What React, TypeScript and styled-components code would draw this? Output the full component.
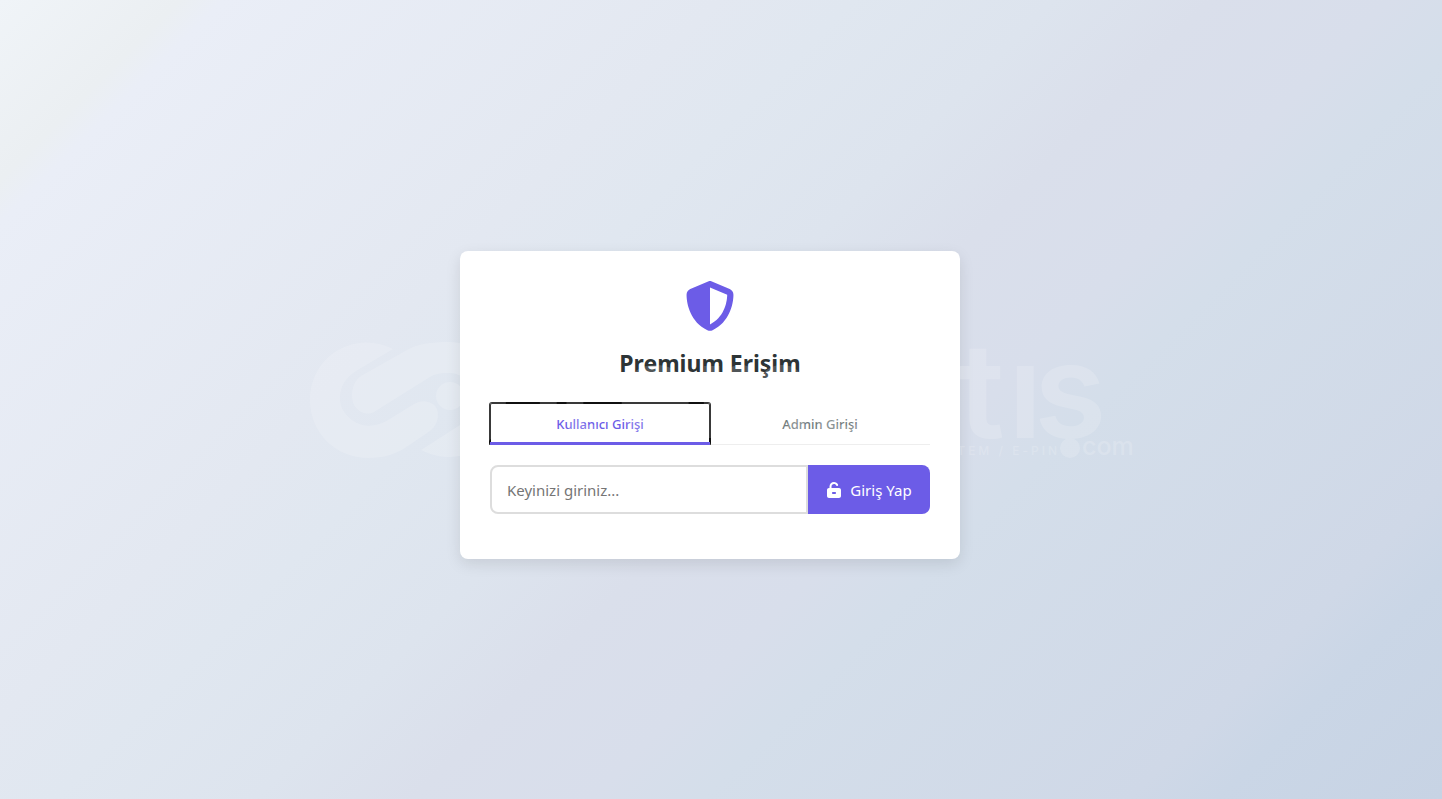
import React, { useState } from "react";
import styled, { createGlobalStyle } from "styled-components";
import { FaShieldHalved, FaUnlockKeyhole } from "react-icons/fa6";

const GlobalStyle = createGlobalStyle`
  * { box-sizing: border-box; }
  body {
    margin: 0;
    font-family: "Noto Sans", "Open Sans", sans-serif;
    color: #2d3436;
  }
`;

const Page = styled.main`
  position: relative;
  min-height: 100vh;
  display: flex;
  align-items: center;
  justify-content: center;
  padding: 11px 22px 0 0;
  background: linear-gradient(
    135deg,
    #f0f4f8 0%, #ebeff2 8%, #eaeef7 10%, #e3e8f1 32%, #e0e7f0 38%,
    #dde4ee 47%, #dadfeb 54%, #d8deeb 62%, #d4deea 67%, #cfd8e7 86%,
    #cad6e6 90%, #c7d3e4 100%
  );
`;

const Card = styled.section`
  width: 100%;
  max-width: 500px;
  padding: 30px 30px 45px;
  background: #fff;
  border-radius: 8px;
  box-shadow: 0 5px 15px rgba(0, 0, 0, 0.1);
`;

const Header = styled.header`
  display: flex;
  flex-direction: column;
  align-items: center;
  gap: 16px;
  color: #6c5ce7;
`;

const Title = styled.h1`
  margin: 0;
  font-size: 23px;
  line-height: 32px;
  font-weight: 700;
  color: #2d3436;
`;

const Tabs = styled.div`
  display: flex;
  margin: 24px 0 20px;
  border-bottom: 1px solid #eee;
`;

const Tab = styled.button<{ $active: boolean }>`
  position: relative;
  flex: 1;
  height: 42px;
  margin-bottom: -1px;
  padding: 0;
  border: 0;
  border-radius: 2px;
  background: none;
  box-shadow: ${(p) => (p.$active ? "0 0 0 1px #101010, inset 0 0 0 1px #101010" : "none")};
  clip-path: inset(-2px -2px 0 -2px);
  font: 500 13px/18px "Noto Sans", sans-serif;
  color: ${(p) => (p.$active ? "#6c5ce7" : "#747d80")};
  outline: none;

  &::after {
    content: "";
    position: absolute;
    inset: auto 0 0;
    height: 3px;
    background: ${(p) => (p.$active ? "#6c5ce7" : "transparent")};
  }
`;

const KeyForm = styled.form`
  display: flex;
  height: 49px;
`;

const KeyInput = styled.input`
  flex: 1;
  min-width: 0;
  padding: 0 15px;
  border: 2px solid #ddd;
  border-radius: 8px 0 0 8px;
  background: #fff;
  font: 400 15px/24px "Noto Sans", sans-serif;
  color: #2d3436;
  outline: none;
  &::placeholder { color: #757575; opacity: 1; }
`;

const Submit = styled.button`
  display: flex;
  align-items: center;
  justify-content: center;
  gap: 8px;
  width: 122px;
  padding: 0;
  border: 0;
  border-radius: 0 8px 8px 0;
  background: #6c5ce7;
  color: #fff;
  font: 400 15px/24px "Noto Sans", sans-serif;
`;

const Watermark = styled.svg`
  position: absolute;
  left: 50%;
  top: 50%;
  width: 824px;
  height: 120px;
  margin: -60px 0 0 -412px;
  overflow: visible;
  pointer-events: none;
  opacity: 0.17;
  fill: #fff;
  font-family: Inter, sans-serif;
`;

function Brand() {
  return (
    <Watermark viewBox="309 340 824 120" aria-hidden="true">
      <path d="M393 349 C376 341 361 341 347 346 C324 354 310 376 310 400 C310 433 336 458 368 458 C385 458 395 454 405 448 L430 431 C440 424 441 407 431 403 C425 400 419 401 414 404 L388 420 C376 427 362 428 352 420 C343 413 340 406 340 398 C340 387 345 378 356 371 Z" />
      <path d="M361 376 L407 350 C417 344 432 342 448 342 C482 342 506 368 506 400 C506 433 480 457 448 457 C438 457 429 454 421 450 L460 425 C472 417 476 409 476 399 C476 383 461 372 447 373 C440 373 435 374 430 377 L374 412 C367 416 358 412 354 405 C350 396 352 382 361 376 Z" />
      <circle cx="450" cy="396" r="14" />
      <g fontSize="132" fontWeight="600">
        <text x="531" y="438">i</text>
        <text x="555" y="438">t</text>
        <text x="616" y="438">e</text>
        <text x="695" y="438">m</text>
        <text x="811" y="438">s</text>
        <text x="880" y="438">a</text>
        <text x="958" y="438">t</text>
        <text x="1008" y="438">ı</text>
        <text x="1034" y="438">s</text>
      </g>
      <circle cx="1070" cy="448" r="10" />
      <text x="1082" y="455" fontSize="25" fontWeight="500">com</text>
      <text x="1060" y="455" fontSize="12" fontWeight="500" letterSpacing="3" textAnchor="end">
        ITEM / E-PIN
      </text>
    </Watermark>
  );
}

export default function App() {
  const [tab, setTab] = useState("user");
  return (
    <>
      <GlobalStyle />
      <Page>
        <Card>
          <Header>
            <FaShieldHalved size={50} aria-hidden="true" />
            <Title>Premium Erişim</Title>
          </Header>
          <Tabs role="tablist">
            <Tab type="button" role="tab" aria-selected={tab === "user"} $active={tab === "user"} onClick={() => setTab("user")}>
              Kullanıcı Girişi
            </Tab>
            <Tab type="button" role="tab" aria-selected={tab === "admin"} $active={tab === "admin"} onClick={() => setTab("admin")}>
              Admin Girişi
            </Tab>
          </Tabs>
          <KeyForm onSubmit={(e) => e.preventDefault()}>
            <KeyInput aria-label="Key" placeholder="Keyinizi giriniz..." />
            <Submit type="submit">
              <FaUnlockKeyhole size={16} aria-hidden="true" />
              Giriş Yap
            </Submit>
          </KeyForm>
        </Card>
        <Brand />
      </Page>
    </>
  );
}
